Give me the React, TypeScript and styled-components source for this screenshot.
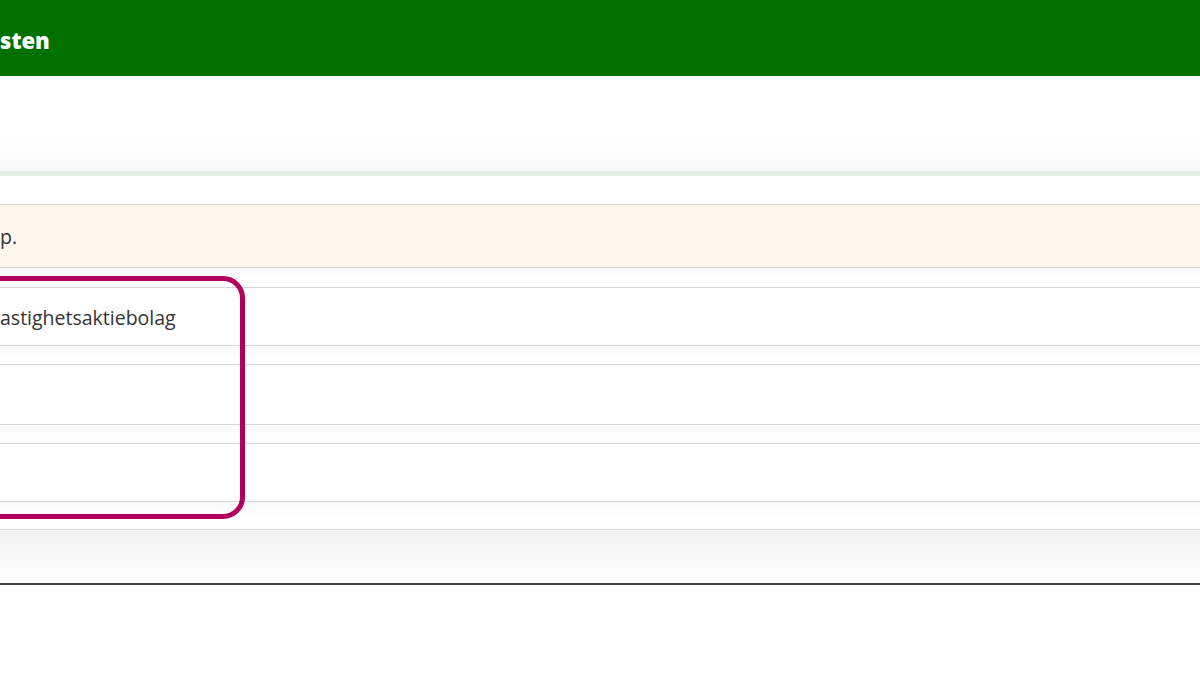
import React from "react";
import styled, { createGlobalStyle } from "styled-components";

const GlobalStyle = createGlobalStyle`
  html, body {
    margin: 0;
    padding: 0;
    background: #fff;
    font-family: "Open Sans", "Segoe UI", Arial, sans-serif;
    overflow: hidden;
  }
`;

const rows = [
  { text: "astighetsaktiebolag", height: 58, gap: 18 },
  { text: "", height: 60, gap: 18 },
  { text: "", height: 58, gap: 27 },
];

const App = () => {
  return (
    <Page>
      <GlobalStyle />
      <Header>
        <Title>sten</Title>
      </Header>
      <Intro />
      <Panel>
        <Notice>p.</Notice>
        <Spacer $h={19} />
        <Rows>
          {rows.map((r, i) => (
            <React.Fragment key={i}>
              <Row $h={r.height}>{r.text}</Row>
              <Spacer $h={r.gap} />
            </React.Fragment>
          ))}
          <Highlight />
        </Rows>
        <Footer />
      </Panel>
    </Page>
  );
};

export default App;

const Page = styled.div`
  width: 100%;
  display: flex;
  flex-direction: column;
`;

const Header = styled.div`
  height: 76px;
  background-color: #007000;
  display: flex;
  align-items: center;
`;

const Title = styled.div`
  color: #fff;
  font-size: 22px;
  font-weight: 800;
  margin-top: 4px;
`;

const Intro = styled.div`
  height: 95px;
  background: linear-gradient(to bottom, #fff 0px, #fff 60px, #f8f8f8 95px);
  border-bottom: 5px solid #e4ede5;
`;

const Panel = styled.div`
  display: flex;
  flex-direction: column;
  padding-top: 28px;
`;

const Notice = styled.div`
  height: 62px;
  background-color: #fdf7ee;
  border-top: 1px solid #d6d6d6;
  border-bottom: 1px solid #d6d6d6;
  display: flex;
  align-items: center;
  font-size: 19.5px;
  color: #333;
`;

const Spacer = styled.div<{ $h: number }>`
  height: ${(p) => p.$h}px;
  border-bottom: 1px solid #d6d6d6;
  background: linear-gradient(to bottom, #fafafa, #fff 60%);
`;

const Rows = styled.div`
  position: relative;
  display: flex;
  flex-direction: column;
`;

const Row = styled.div<{ $h: number }>`
  height: ${(p) => p.$h}px;
  box-sizing: border-box;
  padding-top: 2px;
  border-bottom: 1px solid #d6d6d6;
  display: flex;
  align-items: center;
  font-size: 19.5px;
  color: #333;
`;

const Highlight = styled.div`
  position: absolute;
  left: -40px;
  top: -12px;
  width: 285px;
  height: 243px;
  box-sizing: border-box;
  border: 5px solid #b2005c;
  border-radius: 22px;
  pointer-events: none;
`;

const Footer = styled.div`
  height: 53px;
  background: linear-gradient(to bottom, #f3f3f3, #fdfdfd);
  border-bottom: 2px solid #444;
`;
